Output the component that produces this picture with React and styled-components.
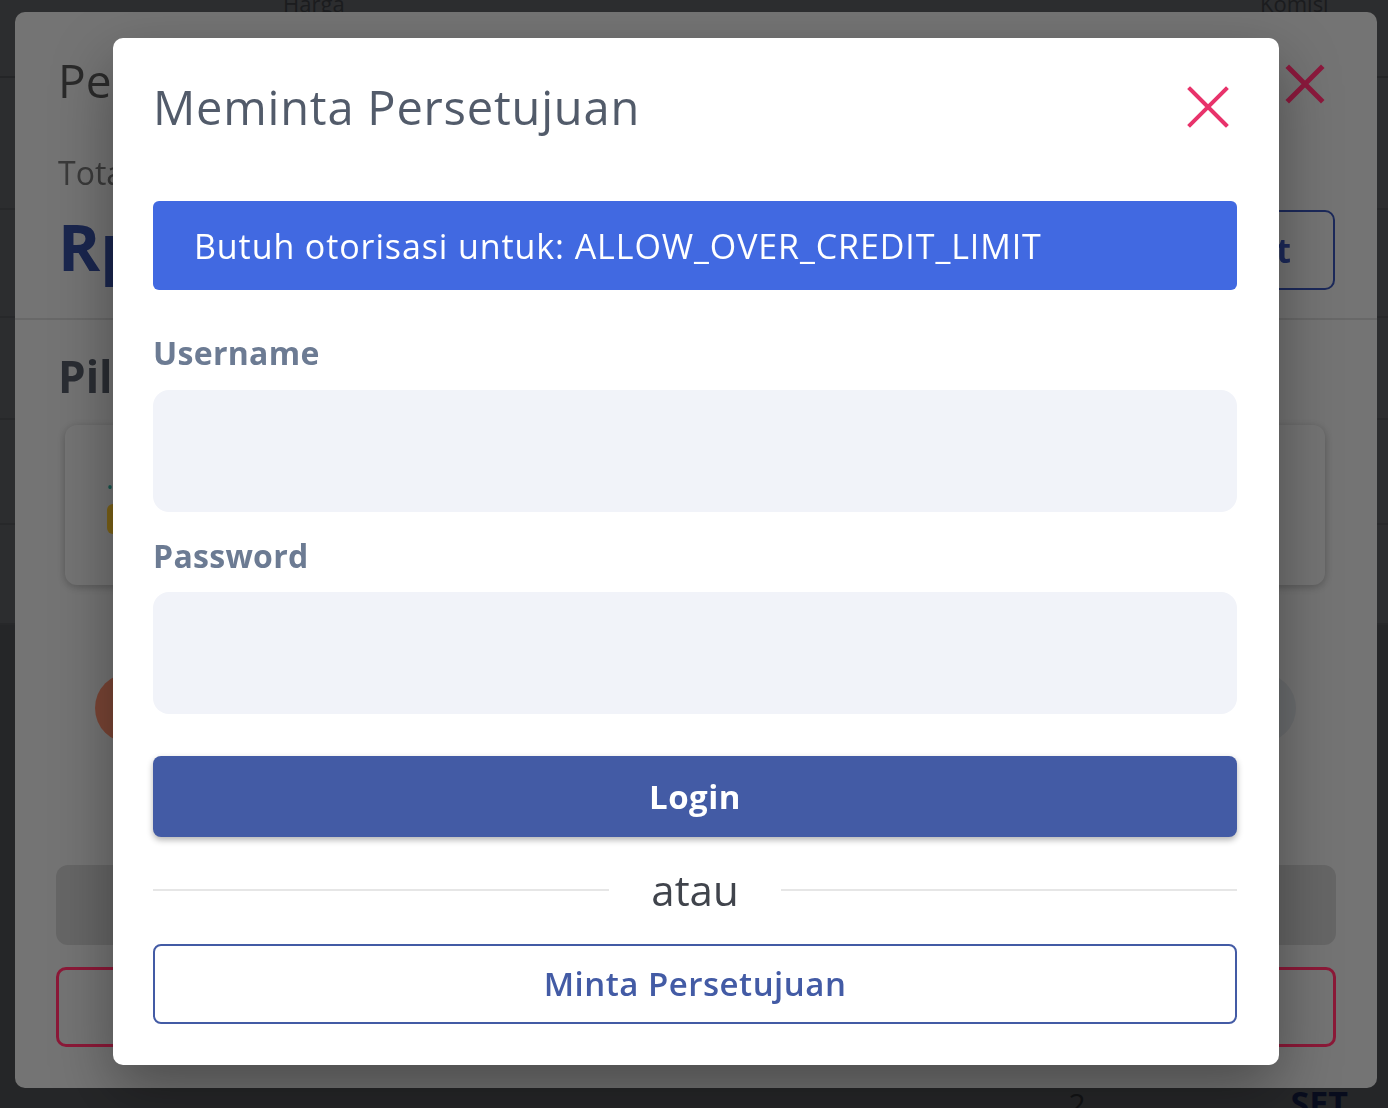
import React from 'react';
import styled, { createGlobalStyle } from 'styled-components';

const GlobalStyle = createGlobalStyle`
  * {
    box-sizing: border-box;
  }
  html,
  body {
    margin: 0;
    padding: 0;
  }
  body {
    font-family: 'Open Sans', 'Noto Sans', sans-serif;
    background: #c8ccd4;
    overflow: hidden;
  }
`;

/* page behind the dialogs */

const Page = styled.main`
  width: 1388px;
  height: 1108px;
  display: flex;
  flex-direction: column;
  background: #c8ccd4;
`;

const TableHead = styled.div`
  display: grid;
  grid-template-columns: 283px 977px 1fr;
  height: 78px;
  border-bottom: 2px solid #a4a8b1;
  font-size: 22px;
  color: #7b808a;
  line-height: 1;
  span {
    margin-top: -8px;
  }
`;

const TableRow = styled.div`
  height: ${({ h }) => h}px;
  border-bottom: 2px solid #b3b7bf;
`;

const Footer = styled.div`
  flex: 1;
  display: flex;
  align-items: flex-end;
  justify-content: flex-end;
  gap: 205px;
  padding: 0 40px 0 0;
  background: #a9adb5;
  font-size: 30px;
  color: #555a63;
  b {
    color: #263a86;
    font-size: 34px;
    margin-bottom: -18px;
  }
  span {
    margin-bottom: -16px;
  }
`;

const Backdrop = styled.div`
  position: fixed;
  inset: 0;
  display: flex;
  align-items: flex-start;
  padding: ${({ pad }) => pad};
  background: rgba(0, 0, 0, ${({ alpha }) => alpha});
`;

/* dialog below: payment */

const BackModal = styled.section`
  width: 1362px;
  height: 1076px;
  display: flex;
  flex-direction: column;
  background: #d4d4d4;
  border-radius: 10px;
  overflow: hidden;
`;

const BackHeader = styled.header`
  position: relative;
  padding: 41px 42px 33px 43px;
  border-bottom: 2px solid #bdbdbd;
`;

const BackTitle = styled.h2`
  margin: 0;
  font-size: 46px;
  font-weight: 400;
  line-height: 1.2;
  color: #4e4e4e;
`;

const BackClose = styled.span`
  position: absolute;
  top: 52px;
  right: 52px;
  width: 40px;
  height: 40px;
`;

const Summary = styled.div`
  display: flex;
  justify-content: space-between;
  align-items: flex-end;
  margin-top: 46px;
`;

const TotalLabel = styled.div`
  font-size: 32px;
  line-height: 1.2;
  color: #6a6a6a;
`;

const Amount = styled.div`
  margin-top: 16px;
  font-size: 64px;
  font-weight: 700;
  line-height: 1.2;
  color: #30458f;
`;

const EditButton = styled.button`
  height: 80px;
  margin-bottom: -5px;
  padding: 0 42px;
  border: 2px solid #334ca4;
  border-radius: 10px;
  background: transparent;
  font-family: inherit;
  font-size: 34px;
  font-weight: 700;
  color: #334ca4;
`;

const BackBody = styled.div`
  display: flex;
  flex-direction: column;
  padding: 30px 41px 0;
`;

const SectionTitle = styled.h3`
  margin: 0;
  padding-left: 2px;
  font-size: 44px;
  font-weight: 700;
  line-height: 1.2;
  color: #4d525d;
`;

const MethodCard = styled.div`
  display: flex;
  flex-direction: column;
  justify-content: center;
  gap: 6px;
  height: 160px;
  margin: 22px 11px 0 9px;
  padding: 0 42px;
  border-radius: 12px;
  background: #d4d4d4;
  box-shadow: 0 2px 8px rgba(0, 0, 0, 0.25);
`;

const MethodNote = styled.span`
  font-size: 16px;
  color: #2a9d8f;
`;

const MethodBadge = styled.span`
  align-self: flex-start;
  height: 30px;
  width: 140px;
  border-radius: 6px;
  background: #e4b42a;
`;

const CircleRow = styled.div`
  display: flex;
  justify-content: space-between;
  margin: 88px 40px 0 39px;
`;

const Circle = styled.span`
  width: 70px;
  height: 70px;
  border-radius: 50%;
  background: ${({ tone }) => tone};
`;

const GreyBlock = styled.div`
  height: 80px;
  margin-top: 122px;
  border-radius: 12px;
  background: #bababa;
`;

const DangerButton = styled.div`
  height: 80px;
  margin-top: 22px;
  border: 3px solid #ff2f66;
  border-radius: 10px;
`;

/* approval dialog */

const Modal = styled.section`
  width: 1166px;
  display: flex;
  flex-direction: column;
  padding: 41px 42px 41px 40px;
  background: #fff;
  border-radius: 10px;
  box-shadow: 0 24px 60px rgba(0, 0, 0, 0.35);
`;

const ModalHeader = styled.div`
  display: flex;
  justify-content: space-between;
  align-items: center;
`;

const ModalTitle = styled.h2`
  margin: 0;
  font-size: 47px;
  font-weight: 400;
  letter-spacing: 0.8px;
  line-height: 1.2;
  color: #525b6a;
`;

const CloseButton = styled.button`
  width: 48px;
  height: 48px;
  margin-right: 5px;
  padding: 0;
  border: none;
  background: none;
  cursor: pointer;
`;

const AuthAlert = styled.div`
  display: flex;
  align-items: center;
  height: 89px;
  margin-top: 66px;
  padding: 0 41px;
  border-radius: 6px;
  background: #4169e1;
  font-size: 34px;
  letter-spacing: 0.9px;
  color: #fff;
`;

const FieldLabel = styled.label`
  display: block;
  margin-top: ${({ first }) => (first ? 44 : 25)}px;
  font-size: 32px;
  font-weight: 700;
  letter-spacing: 0.3px;
  line-height: 1.2;
  color: #6c7b93;
`;

const TextInput = styled.input`
  display: block;
  width: 100%;
  height: 122px;
  margin-top: 17px;
  padding: 0 30px;
  border: none;
  border-radius: 16px;
  background: #f1f3f9;
  font-family: inherit;
  font-size: 32px;
  outline: none;
`;

const PrimaryButton = styled.button`
  height: 81px;
  margin-top: 42px;
  border: none;
  border-radius: 8px;
  background: #435ba5;
  box-shadow: 0 3px 6px rgba(0, 0, 0, 0.3);
  font-family: inherit;
  font-size: 33px;
  font-weight: 700;
  letter-spacing: 0.5px;
  color: #fff;
`;

const OrDivider = styled.div`
  display: flex;
  align-items: center;
  gap: 42px;
  margin: 28px 0;
  font-size: 42px;
  line-height: 1.2;
  color: #40444c;
  &::before,
  &::after {
    content: '';
    flex: 1;
    height: 2px;
    background: #e6e6e6;
  }
`;

const OutlineButton = styled.button`
  height: 80px;
  border: 2px solid #435ba5;
  border-radius: 8px;
  background: #fff;
  font-family: inherit;
  font-size: 33px;
  font-weight: 600;
  letter-spacing: 0.5px;
  color: #435ba5;
`;

const CrossIcon = ({ color, size = 48, inset = 6, width = 4 }) => (
  <svg width={size} height={size} viewBox={`0 0 ${size} ${size}`}>
    <path
      d={`M${inset} ${inset} L${size - inset} ${size - inset} M${size - inset} ${inset} L${inset} ${size - inset}`}
      stroke={color}
      strokeWidth={width}
      strokeLinecap="square"
      fill="none"
    />
  </svg>
);

const rows = [132, 108, 102, 105, 100];

export default function App() {
  return (
    <>
      <GlobalStyle />
      <Page>
        <TableHead>
          <span />
          <span>Harga</span>
          <span>Komisi</span>
        </TableHead>
        {rows.map((h, i) => (
          <TableRow key={i} h={h} />
        ))}
        <Footer>
          <span>2</span>
          <b>SET</b>
        </Footer>
      </Page>

      <Backdrop alpha={0.6} pad="12px 11px 0 15px">
        <BackModal>
          <BackHeader>
            <BackTitle>Pembayaran</BackTitle>
            <BackClose>
              <CrossIcon color="#ff2f70" size={40} inset={4} width={5} />
            </BackClose>
            <Summary>
              <div>
                <TotalLabel>Total Tagihan</TotalLabel>
                <Amount>Rp 2.450.000</Amount>
              </div>
              <EditButton>Edit</EditButton>
            </Summary>
          </BackHeader>
          <BackBody>
            <SectionTitle>Pilih Metode Pembayaran</SectionTitle>
            <MethodCard>
              <MethodNote>•</MethodNote>
              <MethodBadge />
            </MethodCard>
            <CircleRow>
              <Circle tone="#de7e62" />
              <Circle tone="#c4c6ca" />
            </CircleRow>
            <GreyBlock />
            <DangerButton />
          </BackBody>
        </BackModal>
      </Backdrop>

      <Backdrop alpha={0.45} pad="38px 109px 0 113px">
        <Modal>
          <ModalHeader>
            <ModalTitle>Meminta Persetujuan</ModalTitle>
            <CloseButton aria-label="Tutup">
              <CrossIcon color="#e8336b" />
            </CloseButton>
          </ModalHeader>
          <AuthAlert>Butuh otorisasi untuk: ALLOW_OVER_CREDIT_LIMIT</AuthAlert>
          <FieldLabel first>Username</FieldLabel>
          <TextInput type="text" />
          <FieldLabel>Password</FieldLabel>
          <TextInput type="password" />
          <PrimaryButton>Login</PrimaryButton>
          <OrDivider>atau</OrDivider>
          <OutlineButton>Minta Persetujuan</OutlineButton>
        </Modal>
      </Backdrop>
    </>
  );
}
